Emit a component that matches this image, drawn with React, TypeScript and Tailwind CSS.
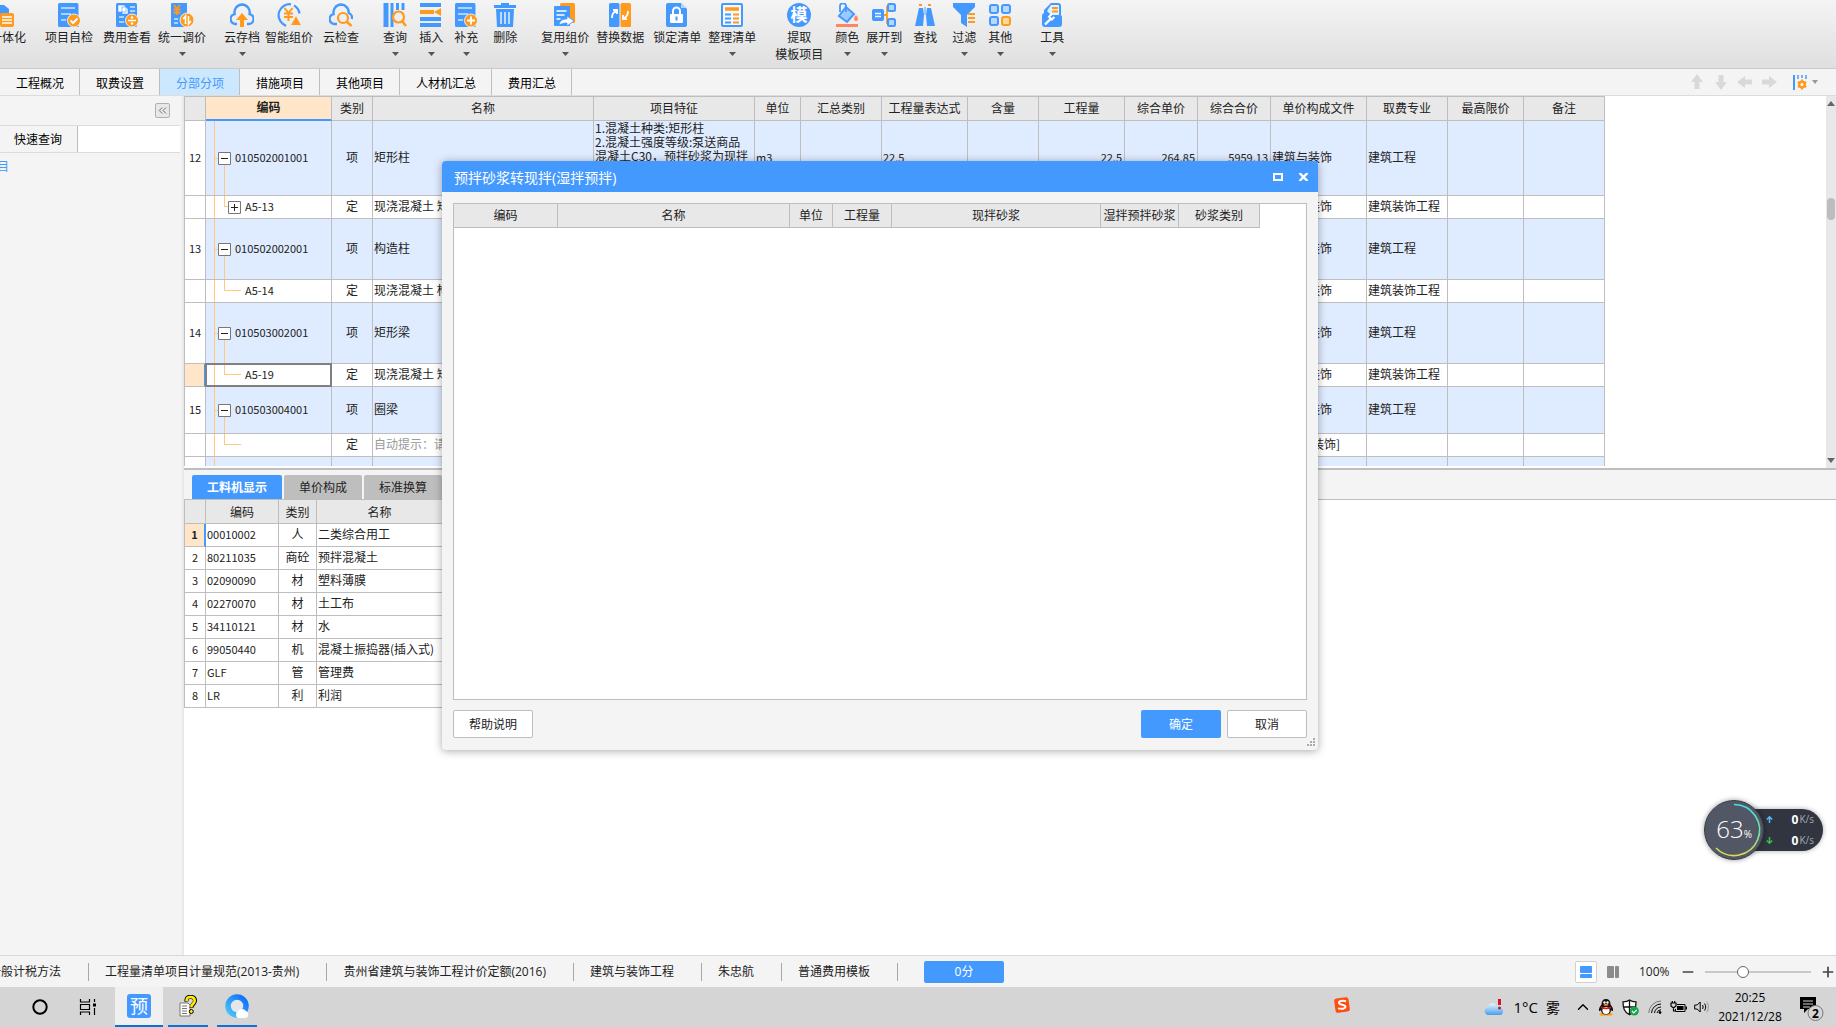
import { useState } from 'react';
import type { ReactNode } from 'react';
import { ChevronUp, Minus, Plus, ChevronsLeft } from 'lucide-react';
import clsx from 'clsx';

const B = '#4499ff';
const O = '#ff9a1c';

interface Tool {
  name: string;
  gap: string;
  icon: ReactNode;
  arrow?: boolean;
  second?: string;
}

const sheet = (
  <>
    <path d="M2.500 0H20a1.500 1.500 0 0 1 1.500 1.500V24H2.500A1.500 1.500 0 0 1 1 22.500v-21A1.500 1.500 0 0 1 2.500 0z" fill={B} />
    <path d="M4 5h14M4 11h10M4 17h5" stroke="#cfe5ff" strokeWidth="1.300" />
  </>
);

const tools: Tool[] = [
  {
    name: '一体化',
    gap: '-ml-[10px]',
    icon: (
      <>
        <path d="M2 2h6l5 4v16H2z" fill={B} />
        <rect x="4" y="10" width="14" height="14" rx="2" fill={O} />
        <path d="M6 14h10M6 17h10M6 20h10" stroke="#fff" strokeWidth="1.500" />
      </>
    ),
  },
  {
    name: '项目自检',
    gap: 'ml-[19px]',
    icon: (
      <>
        {sheet}
        <circle cx="17" cy="17.500" r="6.500" fill={O} stroke="#f0f0f0" />
        <path d="M13.500 17.500l2.500 2.500 4.500-4.500" fill="none" stroke="#fff" strokeWidth="2" />
      </>
    ),
  },
  {
    name: '费用查看',
    gap: 'ml-[10px]',
    icon: (
      <>
        <rect x="1" width="21" height="24" rx="1.500" fill={B} />
        <path d="M3 2h6l2 2v5H3zM7 4h4l2 2v5H7z" fill="#fff" stroke={B} strokeWidth=".6" />
        <path d="M15 4h5M15 8h5M4 14h5M4 19h5" stroke="#cfe5ff" strokeWidth="1.400" />
        <circle cx="17" cy="17.500" r="6.500" fill={O} stroke="#f0f0f0" />
        <path d="M13 17.500h8" stroke="#fff" strokeWidth="1.600" />
        <circle cx="17" cy="14.500" r="1.200" fill="#fff" />
        <circle cx="17" cy="20.500" r="1.200" fill="#fff" />
      </>
    ),
  },
  {
    name: '统一调价',
    gap: 'ml-[7px]',
    arrow: true,
    icon: (
      <>
        <path d="M1 1a1 1 0 0 1 1-1h15v24H2a1 1 0 0 1-1-1z" fill={B} />
        <path d="M4 2l3 4 3-4M3.500 6.500h7M3.500 9.500h7M7 6v6" fill="none" stroke={O} strokeWidth="1.800" />
        <path d="M4 16h4M4 20h4" stroke="#cfe5ff" strokeWidth="1.400" />
        <circle cx="17" cy="17" r="7" fill={O} stroke="#f0f0f0" />
        <path d="M15.500 21v-8l-2.500 3M18.500 13v8l2.500-3" fill="none" stroke="#fff" strokeWidth="1.600" />
      </>
    ),
  },
  {
    name: '云存档',
    gap: 'ml-[18px]',
    arrow: true,
    icon: (
      <>
        <path d="M7 21H5.500a5 5 0 0 1-.9-9.900A8 8 0 0 1 12 1.500a8 8 0 0 1 7.600 9.600 5 5 0 0 1-1 9.900H17" fill="none" stroke={B} strokeWidth="2.400" />
        <path d="M12 10l6 7h-4v7h-4v-7H6z" fill={O} />
      </>
    ),
  },
  {
    name: '智能组价',
    gap: 'ml-[5px]',
    icon: (
      <>
        <path d="M14 1.300A11 11 0 0 0 6 21M9 23l-3-2.200M17 2.500a11 11 0 0 1 5.500 8" fill="none" stroke={B} strokeWidth="2.200" />
        <path d="M7.500 5l4 5 4-5M7 10.500h9M7 14h9M11.500 10v8" fill="none" stroke={O} strokeWidth="2" />
        <path d="M19 13l2 4 3 5H14l3-5z" fill={O} />
      </>
    ),
  },
  {
    name: '云检查',
    gap: 'ml-[10px]',
    icon: (
      <>
        <path d="M8 21H5.500a5 5 0 0 1-.9-9.900A8 8 0 0 1 12 1.500a8 8 0 0 1 7.800 8.500 5 5 0 0 1 3 6" fill="none" stroke={B} strokeWidth="2.400" />
        <circle cx="14" cy="15" r="5" fill="none" stroke={O} strokeWidth="2.200" />
        <path d="M17.500 18.500l5 4.500" stroke={O} strokeWidth="2.500" />
      </>
    ),
  },
  {
    name: '查询',
    gap: 'ml-[24px]',
    arrow: true,
    icon: (
      <>
        <path d="M3 0v24" stroke={B} strokeWidth="5" />
        <path d="M9 0v24M14.500 0v7M20 0v7" stroke={B} strokeWidth="3" />
        <circle cx="15.500" cy="14" r="5.500" fill="#eee" stroke={O} strokeWidth="2.200" />
        <path d="M19 18l4 5" stroke={O} strokeWidth="2.500" />
      </>
    ),
  },
  {
    name: '插入',
    gap: 'ml-[12px]',
    arrow: true,
    icon: (
      <>
        <path d="M1 2h21M1 16h21M1 22h21" stroke={B} strokeWidth="4" />
        <path d="M1 9h14" stroke={O} strokeWidth="4" />
        <path d="M22 5v8l-7-4z" fill={O} />
      </>
    ),
  },
  {
    name: '补充',
    gap: 'ml-[11px]',
    arrow: true,
    icon: (
      <>
        {sheet}
        <circle cx="17" cy="17.500" r="6.500" fill={O} stroke="#f0f0f0" />
        <path d="M13 17.500h8M17 13.500v8" stroke="#fff" strokeWidth="2" />
      </>
    ),
  },
  {
    name: '删除',
    gap: 'ml-[15px]',
    icon: (
      <>
        <path d="M8 0h8v2h7v3H1V2h7zM3 6h18l-1 18H4z" fill={B} />
        <path d="M8 9v12M12 9v12M16 9v12" stroke="#e6f1ff" strokeWidth="1.500" />
      </>
    ),
  },
  {
    name: '复用组价',
    gap: 'ml-[24px]',
    arrow: true,
    icon: (
      <>
        <rect x="7" width="15" height="20" rx="1.500" fill={O} />
        <path d="M2 3h14a1 1 0 0 1 1 1v19H2a1 1 0 0 1-1-1V4a1 1 0 0 1 1-1z" fill={B} />
        <path d="M3.500 8h10M3.500 12h8M3.500 16h4" stroke="#fff" strokeWidth="1.500" />
        <path d="M6 22c1-5 4-6 8-6v-3l7 5-7 5v-3c-3 0-5 .5-8 2z" fill="#fff" stroke={B} strokeWidth=".8" />
      </>
    ),
  },
  {
    name: '替换数据',
    gap: 'ml-[7px]',
    icon: (
      <>
        <rect x="1" width="10.500" height="24" rx="1.500" fill={B} />
        <rect x="12.500" width="10.500" height="24" rx="1.500" fill={O} />
        <path d="M4 15c0-4 1-5 4-7M5 7h4v4M20 8c0 4-1 6-4 7M19 16h-4v-4" fill="none" stroke="#fff" strokeWidth="1.800" />
      </>
    ),
  },
  {
    name: '锁定清单',
    gap: 'ml-[9px]',
    icon: (
      <>
        <path d="M3 0h13l6 6v16a2 2 0 0 1-2 2H3a2 2 0 0 1-2-2V2a2 2 0 0 1 2-2z" fill={B} />
        <path d="M16 0v5h6z" fill="#b5d7ff" />
        <rect x="5" y="11" width="13" height="9" rx="1" fill="#fff" />
        <path d="M8 11V8a3.500 3.500 0 0 1 7 0v3" fill="none" stroke="#fff" strokeWidth="2" />
        <path d="M11.500 13.500v4" stroke={B} strokeWidth="2" />
      </>
    ),
  },
  {
    name: '整理清单',
    gap: 'ml-[7px]',
    arrow: true,
    icon: (
      <>
        <rect x="2" y="1" width="20" height="22" rx="1" fill="#f4f8ff" stroke={B} strokeWidth="2" />
        <path d="M5 6h14" stroke={O} strokeWidth="3.500" />
        <path d="M5 11.500h6M5 15.500h6M5 19.500h6" stroke={B} strokeWidth="2" />
        <path d="M13 11.500h6M13 15.500h6M13 19.500h6" stroke={O} strokeWidth="2" />
      </>
    ),
  },
  {
    name: '提取',
    gap: 'ml-[19px]',
    second: '模板项目',
    icon: (
      <>
        <circle cx="12" cy="12" r="12" fill={B} />
        <text x="12" y="18" textAnchor="middle" fontSize="17" fontWeight="700" fill="#fff">
          模
        </text>
      </>
    ),
  },
  {
    name: '颜色',
    gap: 'ml-[12px]',
    arrow: true,
    icon: (
      <>
        <path d="M11 4l8 7-7 8-8-6z" fill="#9cc9ff" stroke={B} strokeWidth="2" />
        <path d="M5 9V3.500A3 3 0 0 1 11 3v6" fill="none" stroke={B} strokeWidth="1.800" />
        <path d="M21 12c1.500 2 2 3 2 4a2 2 0 0 1-4 0c0-1 .5-2 2-4z" fill="#ff8661" />
        <path d="M1 22.500h22" stroke="#ff8661" strokeWidth="3" />
      </>
    ),
  },
  {
    name: '展开到',
    gap: 'ml-[7px]',
    arrow: true,
    icon: (
      <>
        <rect x="0" y="6" width="12" height="12" rx="2" fill={B} />
        <path d="M3 10.500h6M3 13.500h6" stroke="#fff" strokeWidth="1.300" />
        <path d="M12 12h3M17 4h-2v16h2" fill="none" stroke={O} strokeWidth="1.800" />
        <rect x="16" y="1" width="7" height="7" rx="1.500" fill="#b5d7ff" stroke={B} strokeWidth="2" />
        <rect x="16" y="16" width="7" height="7" rx="1.500" fill="#b5d7ff" stroke={B} strokeWidth="2" />
      </>
    ),
  },
  {
    name: '查找',
    gap: 'ml-[11px]',
    icon: (
      <>
        <path d="M6 1h3v2H6zM15 1h3v2h-3z" fill={O} />
        <path d="M6 5h4l1 7-1 11H2zM14 5h4l4 18h-8l-1-11z" fill={B} />
        <path d="M11 4h2v8h-2z" fill="#9cc9ff" />
      </>
    ),
  },
  {
    name: '过滤',
    gap: 'ml-[15px]',
    arrow: true,
    icon: (
      <>
        <path d="M1 0h22v4l-8 8v12l-6-4v-8L1 4z" fill={B} />
        <path d="M16 11h7M16 15h7M16 19h7" stroke={O} strokeWidth="2" />
      </>
    ),
  },
  {
    name: '其他',
    gap: 'ml-[12px]',
    arrow: true,
    icon: (
      <>
        <g fill="#b9d8ff" stroke={B} strokeWidth="2">
          <rect x="2" y="2" width="8" height="8" rx="2" />
          <rect x="14" y="2" width="8" height="8" rx="2" />
          <rect x="2" y="14" width="8" height="8" rx="2" />
        </g>
        <rect x="14" y="14" width="8" height="8" rx="2" fill="#ffd79a" stroke={O} strokeWidth="2" />
      </>
    ),
  },
  {
    name: '工具',
    gap: 'ml-[28px]',
    arrow: true,
    icon: (
      <>
        <path d="M11 0h7a3 3 0 0 1 3 3v9h-1a2 2 0 0 1 2 2v7a3 3 0 0 1-3 3H5a3 3 0 0 1-3-3v-8a3 3 0 0 1 2-3V7z" fill={B} />
        <path d="M11 2h7a1 1 0 0 1 1 1v9h-8L7 8z" fill="#e3f0ff" />
        <path d="M12 5h6M12 8.500h6" stroke={O} strokeWidth="1.800" />
        <path d="M5 21.500l6-6" stroke="#fff" strokeWidth="2.400" />
        <path d="M9.500 12v3.500h4V12" fill="none" stroke="#fff" strokeWidth="2" transform="rotate(45 11.500 14)" />
      </>
    ),
  },
];

const pageTabs = ['工程概况', '取费设置', '分部分项', '措施项目', '其他项目', '人材机汇总', '费用汇总'];

const columns = [
  { name: '', width: 21 },
  { name: '编码', width: 126 },
  { name: '类别', width: 41 },
  { name: '名称', width: 221 },
  { name: '项目特征', width: 161 },
  { name: '单位', width: 46 },
  { name: '汇总类别', width: 81 },
  { name: '工程量表达式', width: 86 },
  { name: '含量', width: 71 },
  { name: '工程量', width: 86 },
  { name: '综合单价', width: 73 },
  { name: '综合合价', width: 73 },
  { name: '单价构成文件', width: 96 },
  { name: '取费专业', width: 81 },
  { name: '最高限价', width: 76 },
  { name: '备注', width: 81 },
];

interface Row {
  no?: string;
  code: string;
  kind: string;
  name: string;
  height: string;
  file: string;
  major: string;
  expandable?: boolean;
  selected?: boolean;
  hint?: boolean;
  feature?: string[];
  unit?: string;
  expr?: string;
  amount?: string;
  price?: string;
  total?: string;
}

const rows: Row[] = [
  {
    no: '12', code: '010502001001', kind: '项', name: '矩形柱', height: 'h-[74px]', file: '建筑与装饰', major: '建筑工程',
    feature: ['1.混凝土种类:矩形柱', '2.混凝土强度等级:泵送商品', '混凝土C30，预拌砂浆为现拌'],
    unit: 'm3', expr: '22.5', amount: '22.5', price: '264.85', total: '5959.13',
  },
  { code: 'A5-13', kind: '定', name: '现浇混凝土 矩形柱', height: 'h-[22px]', file: '建筑与装饰', major: '建筑装饰工程', expandable: true },
  { no: '13', code: '010502002001', kind: '项', name: '构造柱', height: 'h-[60px]', file: '建筑与装饰', major: '建筑工程' },
  { code: 'A5-14', kind: '定', name: '现浇混凝土 构造柱', height: 'h-[22px]', file: '建筑与装饰', major: '建筑装饰工程' },
  { no: '14', code: '010503002001', kind: '项', name: '矩形梁', height: 'h-[60px]', file: '建筑与装饰', major: '建筑工程' },
  { code: 'A5-19', kind: '定', name: '现浇混凝土 矩形梁', height: 'h-[22px]', file: '建筑与装饰', major: '建筑装饰工程', selected: true },
  { no: '15', code: '010503004001', kind: '项', name: '圈梁', height: 'h-[46px]', file: '建筑与装饰', major: '建筑工程' },
  { code: '', kind: '定', name: '自动提示：请', height: 'h-[22px]', file: '[建筑与装饰]', major: '', hint: true },
];

const resources = [
  ['00010002', '人', '二类综合用工'],
  ['80211035', '商砼', '预拌混凝土'],
  ['02090090', '材', '塑料薄膜'],
  ['02270070', '材', '土工布'],
  ['34110121', '材', '水'],
  ['99050440', '机', '混凝土振捣器(插入式)'],
  ['GLF', '管', '管理费'],
  ['LR', '利', '利润'],
];

const mortarColumns = [
  { name: '编码', width: 104 },
  { name: '名称', width: 232 },
  { name: '单位', width: 43 },
  { name: '工程量', width: 59 },
  { name: '现拌砂浆', width: 209 },
  { name: '湿拌预拌砂浆', width: 78 },
  { name: '砂浆类别', width: 81 },
];

const statusItems = ['工程量清单项目计量规范(2013-贵州)', '贵州省建筑与装饰工程计价定额(2016)', '建筑与装饰工程', '朱忠航', '普通费用模板'];

const cell = 'border-r border-b border-[#bebebe] pt-0 pb-[2px]';
const headCell = 'border-r border-b border-[#bebebe] bg-[#e8e8e8] p-0 font-normal';

function Caret() {
  return (
    <svg width="7" height="4" viewBox="0 0 7 4">
      <path d="M0 0h7L3.500 4z" fill="#555" />
    </svg>
  );
}

function ToggleBox({ plus }: { plus?: boolean }) {
  return (
    <button aria-label={plus ? '展开' : '折叠'} className="block size-[13px] shrink-0 bg-white">
      <svg width="13" height="13" viewBox="0 0 13 13">
        <path d="M.5 .5h12v12H.5z" fill="#fff" stroke="#777" />
        <path d={plus ? 'M3 6.500h7M6.500 3v7' : 'M3 6.500h7'} stroke="#222" />
      </svg>
    </button>
  );
}

function CodeCell({ row }: { row: Row }) {
  const parent = Boolean(row.no);
  return (
    <div className={clsx('flex items-center', row.height, row.selected && 'outline-2 -outline-offset-1 outline-[#808080]')}>
      <span className="ml-[8px] w-px self-stretch bg-[#ffc982]" />
      {parent ? (
        <>
          <span className="h-px w-[3px] bg-[#ffc982]" />
          <span className="flex flex-col items-center self-stretch">
            <span className="flex-1" />
            <ToggleBox />
            <span className="w-px flex-1 bg-[#ffc982]" />
          </span>
        </>
      ) : (
        <>
          <span
            className={clsx('ml-[9px] h-1/2 self-start border-b border-l border-[#ffc982]', row.expandable ? 'w-[4px]' : 'w-[17px]')}
          />
          {row.expandable && <ToggleBox plus />}
        </>
      )}
      <span className="ml-[4px] pb-[2px] text-[11px]">{row.code}</span>
    </div>
  );
}

function Toolbar() {
  return (
    <header className="flex h-[69px] shrink-0 items-start overflow-hidden border-b border-[#cbcbcb] bg-linear-to-b from-[#f4f4f4] to-[#dfdfdf] pt-[3px]">
      {tools.map((tool) => (
        <button key={tool.name} className={clsx('flex shrink-0 flex-col items-center whitespace-nowrap', tool.gap)}>
          <svg width="24" height="24" viewBox="0 0 24 24">
            {tool.icon}
          </svg>
          <span className="mt-[3px] leading-4">{tool.name}</span>
          {tool.second && <span className="mt-px leading-4">{tool.second}</span>}
          {tool.arrow && (
            <span className="mt-[6px]">
              <Caret />
            </span>
          )}
        </button>
      ))}
    </header>
  );
}

function PageTabs() {
  const [active, setActive] = useState('分部分项');
  return (
    <nav className="flex h-[27px] shrink-0 items-stretch border-b border-[#dcdcdc] bg-[#f4f4f4]">
      {pageTabs.map((tab) => (
        <button
          key={tab}
          onClick={() => setActive(tab)}
          className={clsx('border-r border-[#bebebe] pt-[3px] pr-[15px] pl-4', active === tab ? 'bg-[#cce8ff] text-[#4499ff]' : 'text-black')}
        >
          {tab}
        </button>
      ))}
      <div className="mr-[18px] ml-auto flex items-center gap-[8px] text-[#d9d9d9]">
        {['', 'rotate-180', '-rotate-90', 'rotate-90'].map((turn) => (
          <button key={turn} aria-label="移动" className={turn}>
            <svg width="16" height="16" viewBox="0 0 16 16">
              <path d="M8 0l6 8h-3.500v7h-5V8H2z" fill="currentColor" />
            </svg>
          </button>
        ))}
        <button aria-label="列设置" className="ml-[8px] flex items-center gap-[5px]">
          <svg width="14" height="15" viewBox="0 0 14 15">
            <path d="M1 0v15" stroke={B} strokeWidth="2" />
            <path d="M5 0v4M9 0v3M13 0v4" stroke={B} strokeWidth="1.500" />
            <circle cx="9" cy="9.500" r="4" fill={O} />
            <path d="M9 4.500v10M4.700 7l8.600 5M13.300 7l-8.600 5" stroke={O} strokeWidth="2" />
            <circle cx="9" cy="9.500" r="1.500" fill="#fff" />
          </svg>
          <svg width="6" height="4" viewBox="0 0 6 4">
            <path d="M0 0h6L3 4z" fill="#999" />
          </svg>
        </button>
      </div>
    </nav>
  );
}

function Sidebar() {
  return (
    <aside className="w-[184px] shrink-0 border-r-2 border-[#e9e9e9] bg-[#f4f4f4] pr-[2px]">
      <div className="flex h-[30px] items-center justify-end border-b border-[#dcdcdc] pr-[10px]">
        <button aria-label="收起" className="flex size-[15px] items-center justify-center rounded-[2px] border border-[#b0b0b0] bg-[#e8e8e8]">
          <ChevronsLeft className="size-[13px] text-[#555]" strokeWidth={1.500} />
        </button>
      </div>
      <div className="flex h-[27px] border-b border-[#dcdcdc] bg-white">
        <button className="w-[78px] border-r border-[#bebebe] bg-[#f4f4f4] pt-[2px] pr-px text-black">快速查询</button>
      </div>
      <a href="#" className="-ml-[3px] mt-[4px] block leading-5 text-[#4499ff]">
        目
      </a>
    </aside>
  );
}

function BillTable() {
  return (
    <div className="flex h-[372px] shrink-0">
      <div className="h-[370px] min-w-0 flex-1 overflow-hidden">
        <table className="w-[1421px] table-fixed border-separate border-spacing-0 border-t border-l border-[#bebebe]">
          <colgroup>
            {columns.map((c) => (
              <col key={c.name} style={{ width: c.width }} />
            ))}
          </colgroup>
          <thead>
            <tr className="h-[24px]">
              {columns.map((c) => (
                <th
                  key={c.name}
                  className={clsx(
                    c.name === '编码' ? 'border-r border-r-[#bebebe] border-b-2 border-b-[#4499ff] bg-[#ffe6c8] p-0 font-bold' : headCell,
                    'leading-[18px]'
                  )}
                >
                  <div className="pb-[2px]">{c.name}</div>
                </th>
              ))}
            </tr>
          </thead>
          <tbody>
            {rows.map((row, i) => (
              <tr key={i} className={row.no ? 'bg-[#dfebff]' : 'bg-white'}>
                <td className={clsx(cell, 'px-0 text-center text-[11px]', row.selected ? 'border-r-2 border-r-[#4499ff] bg-[#ffe6c8]' : 'bg-white')}>
                  {row.no}
                </td>
                <td className="border-r border-b border-[#bebebe] p-0">
                  <CodeCell row={row} />
                </td>
                <td className={clsx(cell, 'px-0 text-center')}>{row.kind}</td>
                <td className={clsx(cell, 'overflow-hidden pr-0 pl-px whitespace-nowrap', row.hint && 'text-[#999]')}>{row.name}</td>
                <td className={clsx(cell, 'pr-0 pl-px align-top leading-[14px] whitespace-nowrap')}>
                  {row.feature?.map((line) => (
                    <div key={line}>{line}</div>
                  ))}
                </td>
                <td className={clsx(cell, 'pr-0 pl-px text-[11px]')}>{row.unit}</td>
                <td className={cell} />
                <td className={clsx(cell, 'pr-0 pl-px text-[11px]')}>{row.expr}</td>
                <td className={cell} />
                <td className={clsx(cell, 'pr-[2px] pl-0 text-right text-[11px]')}>{row.amount}</td>
                <td className={clsx(cell, 'pr-[2px] pl-0 text-right text-[11px]')}>{row.price}</td>
                <td className={clsx(cell, 'pr-[2px] pl-0 text-right text-[11px]')}>{row.total}</td>
                <td className={clsx(cell, 'pr-0 pl-px')}>{row.file}</td>
                <td className={clsx(cell, 'pr-0 pl-px')}>{row.major}</td>
                <td className={cell} />
                <td className={cell} />
              </tr>
            ))}
            <tr className="h-[24px] bg-[#dfebff]">
              {columns.map((c, i) => (
                <td key={c.name} className={clsx('border-r border-b border-[#bebebe] p-0', i === 0 && 'bg-white')}>
                  {i === 1 && <div className="ml-[8px] h-[22px] w-px bg-[#ffc982]" />}
                </td>
              ))}
            </tr>
          </tbody>
        </table>
      </div>
      <div className="flex w-[10px] flex-col items-center justify-between bg-[#e8e8e8] py-[5px]">
        <svg width="8" height="5" viewBox="0 0 8 5">
          <path d="M4 0l4 5H0z" fill="#666" />
        </svg>
        <div className="mb-[146px] h-[22px] w-[8px] rounded-full bg-[#bdbdbd]" />
        <svg width="8" height="5" viewBox="0 0 8 5">
          <path d="M4 5L0 0h8z" fill="#666" />
        </svg>
      </div>
    </div>
  );
}

function ResourcePanel() {
  const [tab, setTab] = useState('工料机显示');
  return (
    <section className="flex min-h-0 flex-1 flex-col border-t-2 border-[#bebebe]">
      <div className="flex h-[30px] shrink-0 items-end gap-[2px] border-b border-[#bebebe] bg-[#f4f4f4] pl-[8px]">
        {['工料机显示', '单价构成', '标准换算'].map((name) => (
          <button
            key={name}
            onClick={() => setTab(name)}
            className={clsx('h-[24px] rounded-t-[2px] px-[15px]', tab === name ? 'bg-[#4499ff] font-bold text-white' : 'bg-[#bebebe] text-[#222]')}
          >
            {name}
          </button>
        ))}
      </div>
      <div className="flex-1 bg-white">
        <table className="w-[600px] table-fixed border-separate border-spacing-0 border-l border-[#bebebe]">
          <colgroup>
            <col className="w-[21px]" />
            <col className="w-[73px]" />
            <col className="w-[38px]" />
            <col className="w-[126px]" />
            <col />
          </colgroup>
          <thead>
            <tr className="h-[24px]">
              {['', '编码', '类别', '名称', ''].map((name, i) => (
                <th key={i} className={headCell}>
                  {name}
                </th>
              ))}
            </tr>
          </thead>
          <tbody>
            {resources.map(([code, kind, name], i) => (
              <tr key={code} className="h-[23px]">
                <td className={clsx(cell, 'px-0 text-center text-[11px]', i === 0 && 'border-r-2 border-r-[#4499ff] bg-[#ffe6c8] font-bold')}>{i + 1}</td>
                <td className={clsx(cell, 'pr-0 pl-px text-[11px]')}>{code}</td>
                <td className={clsx(cell, 'px-0 text-center')}>{kind}</td>
                <td className={clsx(cell, 'pr-0 pl-px whitespace-nowrap')}>{name}</td>
                <td className={cell} />
              </tr>
            ))}
          </tbody>
        </table>
      </div>
    </section>
  );
}

function MortarDialog() {
  return (
    <div
      role="dialog"
      aria-label="预拌砂浆转现拌(湿拌预拌)"
      className="absolute top-[161px] left-[442px] flex h-[589px] w-[876px] flex-col rounded-[4px] bg-[#f4f4f4] shadow-[0_1px_8px_rgba(0,0,0,0.35)]"
    >
      <div className="flex h-[31px] shrink-0 items-center rounded-t-[4px] bg-[#4499ff] px-3 text-white">
        <h2 className="flex-1 pt-[2px] text-[14px]">预拌砂浆转现拌(湿拌预拌)</h2>
        <button aria-label="最大化" className="mr-[15px]">
          <svg width="10" height="8" viewBox="0 0 10 8">
            <path d="M1 1h8v6H1z" fill="none" stroke="#fff" strokeWidth="2" />
          </svg>
        </button>
        <button aria-label="关闭" className="-mr-[3px]">
          <svg width="11" height="8" viewBox="0 0 11 8">
            <path d="M1.500 0l8 8M9.500 0l-8 8" stroke="#fff" strokeWidth="2.400" />
          </svg>
        </button>
      </div>
      <div className="mx-[11px] mt-[11px] flex-1 border border-[#bebebe] bg-white">
        <table className="w-[806px] table-fixed border-separate border-spacing-0">
          <colgroup>
            {mortarColumns.map((c) => (
              <col key={c.name} style={{ width: c.width }} />
            ))}
          </colgroup>
          <thead>
            <tr className="h-[24px]">
              {mortarColumns.map((c) => (
                <th key={c.name} className={clsx(headCell, 'whitespace-nowrap')}>
                  {c.name}
                </th>
              ))}
            </tr>
          </thead>
        </table>
      </div>
      <div className="flex h-[50px] shrink-0 items-start gap-[6px] px-[11px] pt-[10px]">
        <button className="mr-auto h-[28px] w-[80px] rounded-[2px] border border-[#bebebe] bg-white pt-[2px]">帮助说明</button>
        <button className="h-[28px] w-[80px] rounded-[2px] bg-[#4499ff] pt-[2px] text-white">确定</button>
        <button className="h-[28px] w-[80px] rounded-[2px] border border-[#bebebe] bg-white pt-[2px]">取消</button>
      </div>
      <svg width="8" height="8" viewBox="0 0 8 8" className="absolute right-[3px] bottom-[4px]">
        <path d="M6 0h2v2H6zM3 3h2v2H3zM6 3h2v2H6zM0 6h2v2H0zM3 6h2v2H3zM6 6h2v2H6z" fill="#aaa" />
      </svg>
    </div>
  );
}

function SpeedGadget() {
  return (
    <div className="absolute right-[13px] bottom-[167px] flex items-center text-white">
      <div className="z-10 -mr-[30px] size-[60px] rounded-full shadow-[0_0_5px_rgba(0,0,0,0.4)]">
        <svg width="60" height="60" viewBox="0 0 60 60">
          <defs>
            <linearGradient id="ring" x1="0" y1="0" x2="0" y2="1">
              <stop offset="0" stopColor="#45dfe6" />
              <stop offset=".6" stopColor="#7fe0a0" />
              <stop offset="1" stopColor="#e8d84a" />
            </linearGradient>
          </defs>
          <circle cx="30" cy="30" r="29.500" fill="#515765" stroke="#363b46" />
          <path d="M30 4.500A25.500 25.500 0 1 1 12 48" fill="none" stroke="url(#ring)" strokeWidth="1.600" />
          <text x="26" y="38" textAnchor="middle" fontSize="24" fontWeight="300" fill="#fff" fontFamily="Open Sans, sans-serif">
            63
          </text>
          <text x="44" y="38" textAnchor="middle" fontSize="10" fill="#fff" fontFamily="Open Sans, sans-serif">
            %
          </text>
        </svg>
      </div>
      <div className="h-[42px] w-[89px] rounded-r-full bg-[#30353f] pr-[9px] pl-[32px] shadow-[0_0_5px_rgba(0,0,0,0.35)]">
        {['#5cb8ff', '#35c24a'].map((color, i) => (
          <div key={color} className="flex h-[21px] items-center">
            <svg width="7" height="7" viewBox="0 0 7 7" className={i === 1 ? 'rotate-180' : ''}>
              <path d="M3.500 7V1M.8 3.500L3.500 .8l2.700 2.700" fill="none" stroke={color} strokeWidth="1.500" />
            </svg>
            <span className="ml-auto text-[12px] font-bold">0</span>
            <span className="ml-px text-[10px] text-[#a5a9b0]">K/s</span>
          </div>
        ))}
      </div>
    </div>
  );
}

function StatusBar() {
  const [zoom, setZoom] = useState(34);
  return (
    <footer className="flex h-[32px] shrink-0 items-center border-t border-[#d8d8d8] bg-[#f4f4f4]">
      <span className="-ml-[11px] whitespace-nowrap">一般计税方法</span>
      {statusItems.map((item) => (
        <span key={item} className="flex items-center whitespace-nowrap">
          <span className="mr-[16px] ml-[27px] h-[18px] w-px bg-[#a0a8b4]" />
          {item}
        </span>
      ))}
      <span className="mr-[26px] ml-[27px] h-[18px] w-px bg-[#a0a8b4]" />
      <button className="h-[22px] w-[80px] rounded-[2px] bg-[#4499ff] text-white">0分</button>
      <div className="ml-auto flex items-center">
        <button aria-label="上下布局" className="flex h-[22px] w-[22px] items-center justify-center rounded-[2px] border border-[#d0d0d0] bg-white">
          <svg width="12" height="12" viewBox="0 0 12 12">
            <rect width="12" height="7" rx="1" fill={B} />
            <rect y="8" width="12" height="4" rx="1" fill={B} />
          </svg>
        </button>
        <button aria-label="左右布局" className="ml-[10px]">
          <svg width="12" height="12" viewBox="0 0 12 12">
            <rect width="7" height="12" rx="1" fill="#8c8c8c" />
            <rect x="8" width="4" height="12" rx="1" fill="#8c8c8c" />
          </svg>
        </button>
        <label htmlFor="zoom" className="ml-[20px] w-[33px]">
          100%
        </label>
        <button aria-label="缩小" className="ml-[8px]">
          <Minus className="size-[16px] text-[#444]" strokeWidth={2.500} />
        </button>
        <input
          id="zoom"
          type="range"
          value={zoom}
          onChange={(e) => setZoom(Number(e.target.value))}
          className="mx-[9px] h-[12px] w-[106px] appearance-none bg-transparent [&::-webkit-slider-runnable-track]:h-[2px] [&::-webkit-slider-runnable-track]:bg-[#c8c8c8] [&::-webkit-slider-thumb]:-mt-[5px] [&::-webkit-slider-thumb]:size-[12px] [&::-webkit-slider-thumb]:appearance-none [&::-webkit-slider-thumb]:rounded-full [&::-webkit-slider-thumb]:border [&::-webkit-slider-thumb]:border-[#666] [&::-webkit-slider-thumb]:bg-white"
        />
        <button aria-label="放大">
          <Plus className="size-[16px] text-[#444]" strokeWidth={2.500} />
        </button>
      </div>
    </footer>
  );
}

function Taskbar() {
  return (
    <div className="flex h-[40px] shrink-0 items-stretch bg-[#d5d5d5] text-black">
      <button aria-label="搜索" className="ml-[32px] flex items-center">
        <svg width="16" height="16" viewBox="0 0 16 16">
          <circle cx="8" cy="8" r="6.700" fill="none" stroke="#000" strokeWidth="2" />
        </svg>
      </button>
      <button aria-label="任务视图" className="mr-[18px] ml-[31px] flex items-center">
        <svg width="18" height="16" viewBox="0 0 18 16">
          <path d="M1.500 0v3h9V0M1.500 16v-3h9v3M1.500 5.500h9v5h-9zM15.500 0v3M15.500 9v7" fill="none" stroke="#000" strokeWidth="1.200" />
          <path d="M14 4.500h3v3h-3z" />
        </svg>
      </button>
      <button className="flex w-[48px] items-center justify-center border-b-2 border-[#0078d7] bg-[#f0f0f0]">
        <span className="flex size-[24px] items-center justify-center rounded-[3px] bg-[#4499ff] text-[18px] leading-none text-white">预</span>
      </button>
      <button aria-label="帮助" className="ml-[5px] flex w-[40px] items-center justify-center border-b-2 border-[#0078d7]">
        <svg width="18" height="22" viewBox="0 0 18 22">
          <path d="M1 8h8l2 2v11H1z" fill="#fff" stroke="#777" />
          <path d="M3 11h5M3 13.500h5M3 16h5M3 18.500h5" stroke="#777" />
          <path d="M7.500 6.500C7 2.500 9 1.800 11.500 1.800c3 0 4.500 1.700 4.500 4 0 3-3.500 3.200-3.500 7" fill="none" stroke="#000" strokeWidth="4" />
          <path d="M7.500 6C7.500 2.500 9 2 11.500 2c3 0 4.200 1.500 4.200 3.800 0 3-3.400 3-3.400 6.500" fill="none" stroke="#ffee00" strokeWidth="2.600" />
          <circle cx="12.300" cy="16.500" r="2" fill="#ffee00" stroke="#000" />
        </svg>
      </button>
      <button aria-label="浏览器" className="ml-[9px] flex w-[40px] items-center justify-center border-b-2 border-[#0078d7]">
        <svg width="24" height="24" viewBox="0 0 24 24">
          <defs>
            <linearGradient id="qq" x1="0" y1="1" x2="1" y2="0">
              <stop offset="0" stopColor="#4cc8f5" />
              <stop offset="1" stopColor="#0a6cff" />
            </linearGradient>
          </defs>
          <circle cx="12" cy="12" r="9" fill="#e4e6e8" stroke="url(#qq)" strokeWidth="5.500" />
          <path d="M13 24a4 4 0 0 1 0-7 5 5 0 0 1 8 0 3.800 3.800 0 0 1 0 7z" fill="#fff" />
        </svg>
      </button>
      <div className="ml-auto flex items-center">
        <svg width="16" height="16" viewBox="0 0 16 16" className="mr-[132px] mb-[4px]">
          <rect x=".8" y=".8" width="14.400" height="14.400" rx="2.500" fill="#ff4d12" transform="rotate(-8 8 8)" />
          <path d="M12 4.200C8 3 4.500 4 5 6.200c.5 1.900 6 1.200 6.400 3.300.4 2.300-3.900 2.800-7.400 1.900" fill="none" stroke="#fff" strokeWidth="2" />
        </svg>
        <svg width="23" height="18" viewBox="0 0 23 18">
          <defs>
            <linearGradient id="cloud" x1="0" y1="0" x2="0" y2="1">
              <stop offset="0" stopColor="#e6f4ff" />
              <stop offset="1" stopColor="#4a9ee8" />
            </linearGradient>
          </defs>
          <path d="M5 17a4.500 4.500 0 0 1 0-8 6 6 0 0 1 10.500-1A5 5 0 0 1 19 17z" fill="url(#cloud)" />
          <path d="M17.500 1v6" stroke="#d8122c" strokeWidth="3" />
          <circle cx="17.500" cy="10" r="1.500" fill="#d8122c" />
        </svg>
        <span className="ml-[9px] text-[15px]">1°C</span>
        <span className="ml-[8px] text-[14px]">雾</span>
        <ChevronUp className="ml-[14px] size-[18px]" strokeWidth={1.800} />
        <svg width="16" height="17" viewBox="0 0 16 17" className="ml-[6px]">
          <ellipse cx="5" cy="15.300" rx="3.500" ry="1.500" fill="#f9a51a" />
          <ellipse cx="11" cy="15.300" rx="3.500" ry="1.500" fill="#f9a51a" />
          <path d="M8 0c3 0 4.500 2 4.500 5.500 1.500 2 3 4 2.500 6.500-1 .5-2-1-2-1 0 3-2 4.500-5 4.500S3 14 3 11c0 0-1 1.500-2 1C.5 9.500 2 7.500 3.500 5.500 3.500 2 5 0 8 0z" fill="#111" />
          <ellipse cx="8" cy="11.500" rx="3.600" ry="3.600" fill="#fff" />
          <circle cx="6.500" cy="3.500" r="1.200" fill="#fff" />
          <circle cx="9.500" cy="3.500" r="1.200" fill="#fff" />
          <ellipse cx="8" cy="5.800" rx="2.500" ry=".9" fill="#f9a51a" />
          <path d="M3 7.500c3 1.500 7 1.500 10 0v1.800c-3 1.300-7 1.300-10 0z" fill="#e8131b" />
        </svg>
        <svg width="17" height="17" viewBox="0 0 17 17" className="ml-[8px]">
          <path d="M7.500 1C9 2.200 11.500 2.800 14 2.800c0 6-1 10-6.500 13C2 12.800 1 8.800 1 2.800c2.500 0 5-.6 6.500-1.800zM7.500 1v14M1 8h13" fill="#fff" stroke="#111" strokeWidth="1.300" />
          <circle cx="12.300" cy="12" r="4.500" fill="#16a34a" />
          <path d="M10 12l1.800 1.800 3-3" fill="none" stroke="#fff" strokeWidth="1.200" />
        </svg>
        <svg width="14" height="14" viewBox="0 0 14 14" className="ml-[9px]" fill="none" stroke="#000">
          <path d="M.7 13A12.500 12.500 0 0 1 13 1" stroke="#777" />
          <path d="M3.500 13A9.500 9.500 0 0 1 13 4M6.500 13A6.500 6.500 0 0 1 13 7M9 13A4 4 0 0 1 13 9.800" />
          <circle cx="12" cy="12.500" r="1" fill="#000" />
        </svg>
        <svg width="17" height="13" viewBox="0 0 17 13" className="ml-[8px]">
          <path d="M1 2h5v3L3.500 7 1 5zM2.300 0v2M4.700 0v2M3.500 7v3H5" fill="none" stroke="#000" strokeWidth="1.200" />
          <path d="M7 3.500h8v7H5.500V8" fill="none" stroke="#000" />
          <path d="M7 5h6.500v4H7zM15.500 5.500H17v3h-1.500z" />
        </svg>
        <svg width="16" height="14" viewBox="0 0 16 14" className="ml-[7px]" fill="none" stroke="#000">
          <path d="M.7 5v4h2.500l3 3V2l-3 3z" />
          <path d="M8.500 5c.8 1 .8 3 0 4M10.500 3.500c1.600 2 1.600 5 0 7" />
          <path d="M12.500 1.500c2.500 3 2.500 8 0 11" stroke="#999" />
        </svg>
        <div className="ml-[6px] w-[68px] text-center text-[12px] leading-[19px]">
          <div>20:25</div>
          <div>2021/12/28</div>
        </div>
        <button aria-label="通知" className="mr-[11px] ml-[15px] pt-[4px]">
          <svg width="26" height="26" viewBox="0 0 26 26">
            <path d="M1 1h16v12H9l-4 4v-4H1z" />
            <path d="M4 5h10M4 8h10M4 11h7" stroke="#d5d5d5" />
            <circle cx="16.500" cy="17" r="7.500" fill="#d5d5d5" stroke="#777" />
            <text x="16.500" y="21.500" textAnchor="middle" fontSize="12" fontWeight="700">
              2
            </text>
          </svg>
        </button>
      </div>
    </div>
  );
}

export default function App() {
  return (
    <div className="relative flex h-screen flex-col overflow-hidden bg-white font-['Open_Sans','Noto_Sans_CJK_SC',sans-serif] text-[12px] text-[#222]">
      <Toolbar />
      <PageTabs />
      <div className="flex min-h-0 flex-1">
        <Sidebar />
        <main className="flex min-w-0 flex-1 flex-col font-['Noto_Sans_CJK_SC',sans-serif]">
          <BillTable />
          <ResourcePanel />
        </main>
      </div>
      <StatusBar />
      <Taskbar />
      <MortarDialog />
      <SpeedGadget />
    </div>
  );
}
